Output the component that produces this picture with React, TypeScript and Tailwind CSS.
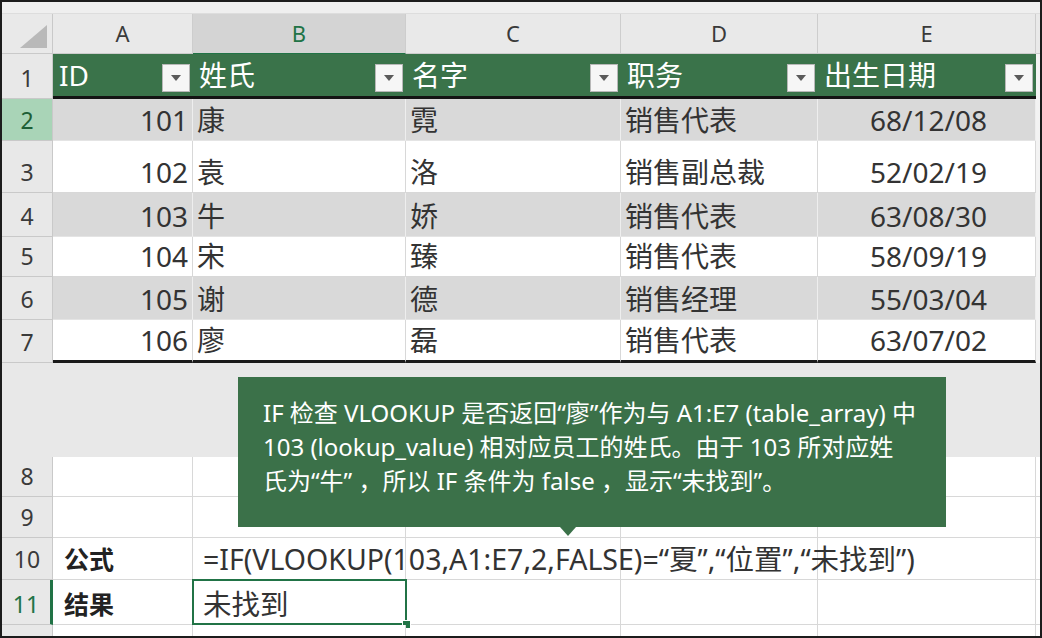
const font = "font-['Noto_Sans','Noto_Sans_CJK_SC',sans-serif]";

type Person = {
  row: number;
  id: number;
  last: string;
  first: string;
  title: string;
  dob: string;
  h: string;
  gray: boolean;
  end?: boolean;
};

const people: Person[] = [
  { row: 2, id: 101, last: "康", first: "霓", title: "销售代表", dob: "68/12/08", h: "h-[42px]", gray: true },
  { row: 3, id: 102, last: "袁", first: "洛", title: "销售副总裁", dob: "52/02/19", h: "h-[52px]", gray: false },
  { row: 4, id: 103, last: "牛", first: "娇", title: "销售代表", dob: "63/08/30", h: "h-[44px]", gray: true },
  { row: 5, id: 104, last: "宋", first: "臻", title: "销售代表", dob: "58/09/19", h: "h-[40px]", gray: false },
  { row: 6, id: 105, last: "谢", first: "德", title: "销售经理", dob: "55/03/04", h: "h-[43px]", gray: true },
  { row: 7, id: 106, last: "廖", first: "磊", title: "销售代表", dob: "63/07/02", h: "h-[43px]", gray: false, end: true },
];

const headers = ["ID", "姓氏", "名字", "职务", "出生日期"];
const widths = ["w-[140px]", "w-[213px]", "w-[215px]", "w-[197px]", "w-[218px]"];

function RowHead({ n, className = "" }: { n: number; className?: string }) {
  return (
    <div
      className={`w-[51px] shrink-0 flex items-end justify-center pb-[5px] border-r border-b border-[#c9c9c9] bg-[#e8e8e8] text-[23px] leading-[30px] text-[#3a3a3a] ${className}`}
    >
      {n}
    </div>
  );
}

function FilterButton() {
  return (
    <div className="w-[28px] h-[28px] mb-[2px] flex items-center justify-center bg-[#f6f6f6] border border-[#b8b8b8]">
      <svg width="10" height="6" viewBox="0 0 10 6">
        <path d="M0 0 L10 0 L5 6 Z" fill="#5a5a5a" />
      </svg>
    </div>
  );
}

function DataRow({ p }: { p: Person }) {
  const cell = p.gray
    ? "bg-[#d9d9d9] border-r border-[#eeeeee]"
    : "bg-white border-r border-[#d8d8d8]";
  const bottom = p.end ? "border-b-[3px] border-b-[#1a1a1a]" : p.gray ? "border-b border-b-[#e4e4e4]" : "border-b border-b-[#d8d8d8]";
  const base = `flex items-end pb-[4px] text-[28px] leading-[32px] text-[#333333] ${cell} ${bottom}`;
  return (
    <div className={`flex shrink-0 ${p.h}`}>
      <RowHead
        n={p.row}
        className={p.row === 2 ? "!bg-[#a9d4b7] !text-[#1e5e36]" : ""}
      />
      <div className={`${base} w-[140px] justify-end pr-[4px]`}>{p.id}</div>
      <div className={`${base} w-[213px] pl-[4px]`}>{p.last}</div>
      <div className={`${base} w-[215px] pl-[4px]`}>{p.first}</div>
      <div className={`${base} w-[197px] pl-[4px]`}>{p.title}</div>
      <div className={`${base} w-[218px] justify-center pl-[4px]`}>{p.dob}</div>
      <div className="flex-1 bg-[#f3f3f3]" />
    </div>
  );
}

function PlainRow({
  n,
  h,
  a,
  b,
  selected,
  headClass = "",
}: {
  n: number;
  h: string;
  a?: string;
  b?: React.ReactNode;
  selected?: boolean;
  headClass?: string;
}) {
  const cell = "bg-white border-r border-b border-[#d8d8d8] flex items-end pb-[4px] leading-[32px]";
  return (
    <div className={`flex ${h} shrink-0`}>
      <RowHead n={n} className={headClass} />
      <div className={`${cell} w-[140px] pl-[11px] text-[25px] font-bold text-[#222222]`}>{a}</div>
      <div className={`${cell} w-[213px] pl-[10px] text-[28.5px] text-[#333333] relative z-10`}>
        <span className="whitespace-nowrap relative">{b}</span>
        {selected && (
          <>
            <div className="absolute -left-[1px] -top-[1px] w-[215px] h-[46px] border-2 border-[#217346]" />
            <div className="absolute -right-[6px] -bottom-[5px] w-[9px] h-[9px] bg-[#217346] border border-white" />
          </>
        )}
      </div>
      <div className={`${cell} w-[215px]`} />
      <div className={`${cell} w-[197px]`} />
      <div className={`${cell} w-[218px]`} />
      <div className="flex-1 bg-white border-b border-[#d8d8d8]" />
    </div>
  );
}

export default function App() {
  return (
    <div className={`relative w-[1042px] h-[638px] overflow-hidden border-2 border-[#1c1c1c] bg-white flex flex-col ${font}`}>
      <div className="h-[12px] shrink-0 bg-[#efefef] border-b border-[#dddddd]" />

      {/* column letters */}
      <div className="flex h-[40px] shrink-0 bg-[#e9e9e9] text-[22px] text-[#3a3a3a]">
        <div className="w-[51px] relative border-r border-b border-[#c9c9c9]">
          <svg className="absolute left-[18px] top-[11px]" width="27" height="23" viewBox="0 0 27 23">
            <path d="M27 0 L27 23 L0 23 Z" fill="#b9b9b9" />
          </svg>
        </div>
        {["A", "B", "C", "D", "E"].map((l, i) => (
          <div
            key={l}
            className={`${widths[i]} flex items-center justify-center border-r border-b border-[#cdcdcd] ${
              l === "B" ? "bg-[#d4d4d4] text-[#217346] border-b-[#217346]" : ""
            }`}
          >
            {l}
          </div>
        ))}
        <div className="flex-1 border-b border-[#cdcdcd]" />
      </div>

      {/* table header */}
      <div className="flex h-[45px] shrink-0">
        <RowHead n={1} />
        {headers.map((t, i) => (
          <div
            key={t}
            className={`${widths[i]} flex items-end justify-between pl-[6px] pr-[3px] bg-[#3a734a] border-b-[3px] border-[#141414] text-white text-[28px] leading-[36px] pb-[2px]`}
          >
            <span className="pb-[1px]">{t}</span>
            <FilterButton />
          </div>
        ))}
        <div className="flex-1 bg-[#f3f3f3]" />
      </div>

      {people.map((p) => (
        <DataRow key={p.row} p={p} />
      ))}

      <div className="h-[94px] shrink-0 bg-[#e8e8e8]" />

      <PlainRow n={8} h="h-[40px]" />
      <PlainRow n={9} h="h-[41px]" />
      <PlainRow n={10} h="h-[42px]" a="公式" b="=IF(VLOOKUP(103,A1:E7,2,FALSE)=“夏”,“位置”,“未找到”)" />
      <PlainRow
        n={11}
        h="h-[45px]"
        a="结果"
        b="未找到"
        selected
        headClass="!text-[#217346] border-r-[3px] !border-r-[#217346] bg-[#dedede]"
      />
      <PlainRow n={12} h="h-[40px]" />

      {/* callout */}
      <div className="absolute z-20 left-[236px] top-[375px] w-[708px] h-[150px] bg-[#3b7149] text-white text-[24px] leading-[34px] pl-[25px] pt-[19px] whitespace-nowrap">
        IF 检查 VLOOKUP 是否返回“廖”作为与 A1:E7 (table_array) 中
        <br />
        103 (lookup_value) 相对应员工的姓氏。由于 103 所对应姓
        <br />
        氏为“牛” ，所以 IF 条件为 false ，显示“未找到”。
        <svg className="absolute left-[322px] top-[150px]" width="16" height="9" viewBox="0 0 16 9">
          <path d="M0 0 L16 0 L8 9 Z" fill="#3b7149" />
        </svg>
      </div>
    </div>
  );
}
